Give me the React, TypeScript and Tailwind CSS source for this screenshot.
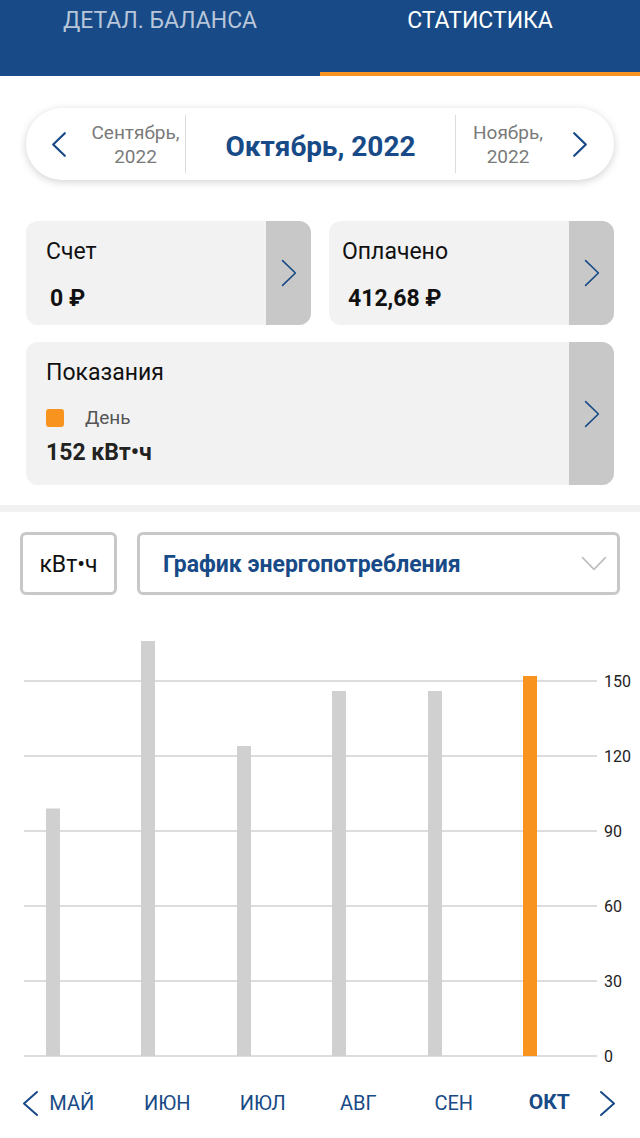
import React from "react";

const BLUE = "#174a86";

function Chevron({
  dir,
  w,
  h,
  stroke = BLUE,
  sw = 2,
}: {
  dir: "left" | "right" | "down";
  w: number;
  h: number;
  stroke?: string;
  sw?: number;
}) {
  const p = sw;
  let d = "";
  if (dir === "left") d = `M${w - p} ${p} L${p} ${h / 2} L${w - p} ${h - p}`;
  if (dir === "right") d = `M${p} ${p} L${w - p} ${h / 2} L${p} ${h - p}`;
  if (dir === "down") d = `M${p} ${p} L${w / 2} ${h - p} L${w - p} ${p}`;
  return (
    <svg width={w} height={h} viewBox={`0 0 ${w} ${h}`} fill="none">
      <path d={d} stroke={stroke} strokeWidth={sw} strokeLinecap="round" strokeLinejoin="round" />
    </svg>
  );
}

const bars = [
  { x: 53, v: 99 },
  { x: 148, v: 166 },
  { x: 244, v: 124 },
  { x: 339, v: 146 },
  { x: 435, v: 146 },
  { x: 530, v: 152, active: true },
];

const ticks = [150, 120, 90, 60, 30, 0];
const months = ["МАЙ", "ИЮН", "ИЮЛ", "АВГ", "СЕН", "ОКТ"];

// chart svg starts at page y=595; zero line at 461
const ZERO = 461;
const SCALE = 2.5;

function ArrowPanel() {
  return (
    <div className="flex w-[45px] shrink-0 items-center justify-center bg-[#c8c8c8]">
      <Chevron dir="right" w={16} h={28} sw={1.6} />
    </div>
  );
}

export default function App() {
  return (
    <div className="min-h-[1138px] w-[640px] overflow-hidden bg-white font-['Roboto',sans-serif]">
      {/* tabs */}
      <div className="flex h-[76px] bg-[#174a86]">
        <div className="flex w-1/2 justify-center border-b-4 border-transparent">
          <span className="text-[23px] leading-[42px] text-[#b7c6da]">ДЕТАЛ. БАЛАНСА</span>
        </div>
        <div className="flex w-1/2 justify-center border-b-4 border-[#f7931e]">
          <span className="text-[23px] leading-[42px] text-white">СТАТИСТИКА</span>
        </div>
      </div>

      {/* month switcher */}
      <div className="mx-[26px] mt-[32px] flex h-[72px] items-center rounded-full bg-white shadow-[0_2px_8px_rgba(0,0,0,0.18)]">
        <div className="flex w-[60px] items-center justify-center pl-[6px]">
          <Chevron dir="left" w={16} h={27} sw={2.2} />
        </div>
        <div className="w-[99px] pt-[2px] text-center text-[19px] leading-[24px] text-[#7a7a7a]">
          Сентябрь,
          <br />
          2022
        </div>
        <div className="h-[58px] w-px bg-[#dcdcdc]" />
        <div className="flex-1 pt-[5px] text-center text-[28px] font-bold text-[#174a86]">Октябрь, 2022</div>
        <div className="h-[58px] w-px bg-[#dcdcdc]" />
        <div className="w-[104px] pt-[2px] text-center text-[19px] leading-[24px] text-[#7a7a7a]">
          Ноябрь,
          <br />
          2022
        </div>
        <div className="flex w-[54px] items-center justify-center pr-[14px]">
          <Chevron dir="right" w={16} h={27} sw={2.2} />
        </div>
      </div>

      {/* summary cards */}
      <div className="mt-[41px] grid grid-cols-2 gap-[18px] px-[26px]">
        <div className="flex h-[104px] overflow-hidden rounded-[12px] bg-[#f2f2f2]">
          <div className="flex-1 pl-[20px] pt-[17px]">
            <div className="text-[23px] leading-[28px] text-[#111]">Счет</div>
            <div className="mt-[19px] pl-[4px] text-[23px] font-bold leading-[28px] text-[#111]">0 ₽</div>
          </div>
          <ArrowPanel />
        </div>
        <div className="flex h-[104px] overflow-hidden rounded-[12px] bg-[#f2f2f2]">
          <div className="flex-1 pl-[13px] pt-[17px]">
            <div className="text-[23px] leading-[28px] text-[#111]">Оплачено</div>
            <div className="mt-[19px] pl-[6px] text-[23px] font-bold leading-[28px] text-[#111]">412,68 ₽</div>
          </div>
          <ArrowPanel />
        </div>
      </div>

      <div className="mx-[26px] mt-[17px] flex h-[143px] overflow-hidden rounded-[12px] bg-[#f2f2f2]">
        <div className="flex-1 pl-[20px] pt-[17px]">
          <div className="text-[23px] leading-[28px] text-[#111]">Показания</div>
          <div className="mt-[19px] flex h-[24px] items-center">
            <div className="h-[18px] w-[18px] rounded-[3px] bg-[#f7931e]" />
            <span className="ml-[21px] text-[19px] leading-[24px] text-[#555]">День</span>
          </div>
          <div className="mt-[9px] text-[23px] font-bold leading-[28px] text-[#222]">152 кВт•ч</div>
        </div>
        <ArrowPanel />
      </div>

      <div className="mt-[20px] h-[7px] bg-[#f1f1f1]" />

      {/* controls */}
      <div className="mt-[20px] flex h-[63px] gap-[20px] px-[20px]">
        <div className="flex w-[97px] items-center justify-center rounded-[6px] border-[3px] border-[#c8c8c8] pt-[3px] text-[23px] text-[#111]">
          кВт•ч
        </div>
        <div className="flex flex-1 items-center justify-between rounded-[6px] border-[3px] border-[#c8c8c8] pl-[23px] pr-[10px]">
          <span className="pt-[3px] text-[23px] font-bold text-[#174a86]">График энергопотребления</span>
          <Chevron dir="down" w={26} h={15} stroke="#bdbdbd" sw={1.6} />
        </div>
      </div>

      {/* chart */}
      <svg width={640} height={471} className="block">
        {ticks.map((t) => {
          const y = ZERO - t * SCALE;
          return (
            <g key={t}>
              <line x1={24} x2={597} y1={y} y2={y} stroke="#d2d2d2" strokeWidth={1.5} />
              <text
                x={604}
                y={y}
                dominantBaseline="central"
                fontSize={16}
                fill="#222"
                fontFamily="Roboto, sans-serif"
              >
                {t}
              </text>
            </g>
          );
        })}
        {bars.map((b) => (
          <rect
            key={b.x}
            x={b.x - 7}
            y={ZERO - b.v * SCALE}
            width={14}
            height={b.v * SCALE}
            fill={b.active ? "#f7931e" : "#d0d0d0"}
          />
        ))}
      </svg>

      {/* months */}
      <div className="relative h-[74px]">
        <div className="absolute left-[22px] top-[24px]">
          <Chevron dir="left" w={17} h={27} sw={2} />
        </div>
        <div className="grid h-full grid-cols-6 items-center pl-[24px] pr-[43px]">
          {months.map((m, i) => (
            <div
              key={m}
              className={
                i === 5
                  ? "text-center text-[21px] font-bold text-[#174a86]"
                  : "text-center text-[20px] text-[#174a86]"
              }
            >
              {m}
            </div>
          ))}
        </div>
        <div className="absolute left-[599px] top-[24px]">
          <Chevron dir="right" w={17} h={27} sw={2} />
        </div>
      </div>
    </div>
  );
}
